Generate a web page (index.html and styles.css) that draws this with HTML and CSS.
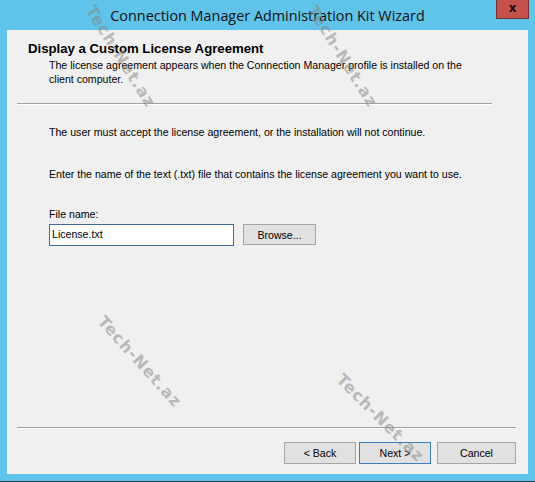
FILE: index.html
```html
<!DOCTYPE html>
<html>
<head>
<meta charset="utf-8">
<link rel="stylesheet" href="styles.css">
</head>
<body>
<div class="window">
  <div class="titlebar">
    <span class="title">Connection Manager Administration Kit Wizard</span>
    <span class="close">x</span>
  </div>
  <div class="client">
    <div class="header">
      <div class="heading">Display a Custom License Agreement</div>
      <div class="desc">The license agreement appears when the Connection Manager profile is installed on the client computer.</div>
    </div>
    <div class="rule top-rule"></div>
    <div class="body">
      <p class="line first">The user must accept the license agreement, or the installation will not continue.</p>
      <p class="line second">Enter the name of the text (.txt) file that contains the license agreement you want to use.</p>
      <label class="label">File name:</label>
      <div class="file-row">
        <div class="input">License.txt</div>
        <div class="btn browse">Browse...</div>
      </div>
    </div>
    <div class="rule bottom-rule"></div>
    <div class="footer">
      <div class="btn">&lt; Back</div>
      <div class="btn default">Next &gt;</div>
      <div class="btn cancel">Cancel</div>
    </div>
  </div>
  <div class="wm wm1">Tech-Net.az</div>
  <div class="wm wm2">Tech-Net.az</div>
  <div class="wm wm3">Tech-Net.az</div>
  <div class="wm wm4">Tech-Net.az</div>
</div>
</body>
</html>
```
FILE: styles.css
```css
html, body {
  margin: 0;
  padding: 0;
}
body {
  width: 535px;
  height: 482px;
  overflow: hidden;
  font-family: "Liberation Sans", Arial, sans-serif;
  color: #000;
}
.window {
  position: relative;
  width: 535px;
  height: 482px;
  box-sizing: border-box;
  background: #60c4ea;
  border-bottom: 1px solid #2a3a44;
  display: flex;
  flex-direction: column;
  overflow: hidden;
}
.titlebar {
  height: 30px;
  display: flex;
  align-items: center;
  justify-content: center;
  flex: none;
}
.title {
  font-family: "Open Sans", sans-serif;
  font-size: 14.4px;
  color: #111;
}
.close {
  position: absolute;
  top: 0;
  left: 496px;
  width: 33px;
  height: 19px;
  box-sizing: border-box;
  background: #c6504a;
  border: 1px solid #6b3430;
  border-top: none;
  color: #111;
  font-family: "DejaVu Sans", sans-serif;
  font-weight: bold;
  font-size: 12px;
  line-height: 16px;
  text-align: center;
}
.client {
  margin: 0 7px 0 7px;
  height: 444px;
  background: #f0f0f0;
  display: flex;
  flex-direction: column;
  font-size: 10.6px;
}
.header {
  padding: 11px 0 0 21px;
  height: 62px;
  box-sizing: border-box;
}
.heading {
  font-size: 13.2px;
  font-weight: bold;
  line-height: 15px;
}
.desc {
  margin: 2px 0 0 21px;
  width: 420px;
  line-height: 14px;
}
.rule {
  height: 1px;
  background: #a0a0a0;
  border-bottom: 1px solid #fff;
  margin-left: 10px;
}
.top-rule {
  margin-top: 11px;
  width: 475px;
}
.body {
  padding-left: 42px;
  height: 322px;
  box-sizing: border-box;
}
.line {
  margin: 0;
  line-height: 14px;
}
.first {
  margin-top: 20px;
}
.second {
  margin-top: 28px;
}
.label {
  display: block;
  margin-top: 26px;
  line-height: 14px;
}
.file-row {
  display: flex;
  gap: 9px;
  margin-top: 3px;
}
.input {
  width: 185px;
  height: 22px;
  box-sizing: border-box;
  border: 1px solid #3f6a9a;
  background: #fff;
  padding: 3px 0 0 2px;
}
.btn {
  height: 21px;
  box-sizing: border-box;
  background: #e1e1e1;
  border: 1px solid #a5a5a5;
  display: flex;
  align-items: center;
  justify-content: center;
  width: 72px;
}
.browse {
  width: 73px;
}
.bottom-rule {
  width: 499px;
}
.footer {
  display: flex;
  justify-content: flex-end;
  padding: 13px 12px 0 0;
  gap: 3px;
}
.footer .btn {
  height: 22px;
}
.default {
  border-color: #3c80c0;
}
.cancel {
  margin-left: 3px;
  width: 79px;
}
.wm {
  position: absolute;
  font-family: "DejaVu Sans", sans-serif;
  font-size: 16px;
  font-weight: bold;
  letter-spacing: 1px;
  color: rgba(130, 130, 130, 0.5);
  transform-origin: 0 0;
  white-space: nowrap;
  pointer-events: none;
}
.wm1 { left: 98px; top: 2px; transform: rotate(58deg); }
.wm2 { left: 320px; top: 2px; transform: rotate(58deg); }
.wm3 { left: 108px; top: 312px; transform: rotate(48deg); }
.wm4 { left: 346px; top: 370px; transform: rotate(45deg); }
```
